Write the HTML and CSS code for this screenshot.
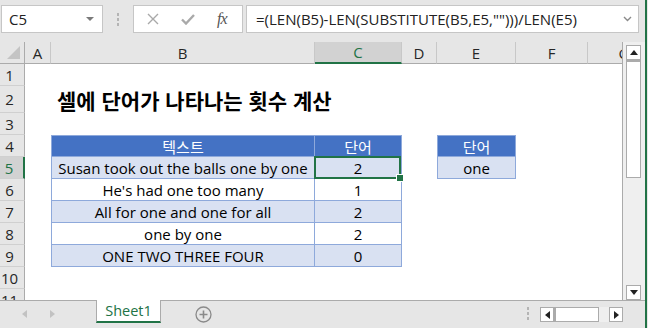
FILE: index.html
```html
<!DOCTYPE html>
<html lang="ko">
<head>
    <meta charset="UTF-8">
    <title>셀에 단어가 나타나는 횟수 계산</title>
    <link rel="stylesheet" href="styles.css">
</head>
<body>
    <div class="app">
        <div class="window">
            <!-- 수식 입력줄 -->
            <div class="formula-bar">
                <div class="name-box">
                    <span>C5</span>
                    <svg width="8" height="5" viewBox="0 0 8 5"><polygon points="0,0 8,0 4,4" fill="#7a7a7a"/></svg>
                </div>
                <div class="grip"><i></i><i></i><i></i></div>
                <div class="fx-buttons">
                    <svg width="12" height="12" viewBox="0 0 12 12"><path d="M1 1 L11 11 M11 1 L1 11" stroke="#a9a9a9" stroke-width="1.4" fill="none"/></svg>
                    <svg width="14" height="11" viewBox="0 0 14 11"><path d="M1 5.5 L5 9.5 L13 1" stroke="#a9a9a9" stroke-width="2.4" fill="none"/></svg>
                    <span class="fx">fx</span>
                </div>
                <div class="formula-input">
                    <span>=(LEN(B5)-LEN(SUBSTITUTE(B5,E5,"")))/LEN(E5)</span>
                    <svg width="9" height="6" viewBox="0 0 9 6"><path d="M1 1 L4.5 4.5 L8 1" stroke="#8a8a8a" stroke-width="1.4" fill="none"/></svg>
                </div>
            </div>

            <div class="main">
                <!-- 시트 영역 -->
                <div class="sheet">
                    <div class="corner"><svg width="25" height="22" viewBox="0 0 25 22"><polygon points="20,4 20,17 7,17" fill="#c4c4c4"/></svg></div>
                    <div class="ch">A</div>
                    <div class="ch">B</div>
                    <div class="ch active">C</div>
                    <div class="ch">D</div>
                    <div class="ch">E</div>
                    <div class="ch">F</div>
                    <div class="ch clip"><span>G</span></div>

                    <div class="rh">1</div><div class="rest"></div>

                    <div class="rh">2</div><div></div>
                    <div class="title">셀에 단어가 나타나는 횟수 계산</div>

                    <div class="rh">3</div><div class="rest"></div>

                    <div class="rh">4</div><div></div>
                    <div class="t hd first top">텍스트</div>
                    <div class="t hd top">단어</div>
                    <div></div>
                    <div class="t hd first top">단어</div>
                    <div class="tail"></div>

                    <div class="rh active">5</div><div></div>
                    <div class="t band first">Susan took out the balls one by one</div>
                    <div class="t band sel">2</div>
                    <div></div>
                    <div class="t band first">one</div>
                    <div class="tail"></div>

                    <div class="rh">6</div><div></div>
                    <div class="t first">He's had one too many</div>
                    <div class="t">1</div>
                    <div class="after"></div>

                    <div class="rh">7</div><div></div>
                    <div class="t band first">All for one and one for all</div>
                    <div class="t band">2</div>
                    <div class="after"></div>

                    <div class="rh">8</div><div></div>
                    <div class="t first">one by one</div>
                    <div class="t">2</div>
                    <div class="after"></div>

                    <div class="rh">9</div><div></div>
                    <div class="t band first">ONE TWO THREE FOUR</div>
                    <div class="t band">0</div>
                    <div class="after"></div>

                    <div class="rh">10</div><div class="rest"></div>
                    <div class="rh">11</div><div class="rest"></div>
                </div>

                <!-- 세로 스크롤바 -->
                <div class="vscroll">
                    <div class="vbar">
                        <div class="arrow-btn"><svg width="8" height="5" viewBox="0 0 8 5"><polygon points="0,5 8,5 4,0" fill="#222"/></svg></div>
                        <div class="vthumb"></div>
                        <div class="track"></div>
                        <div class="arrow-btn"><svg width="8" height="5" viewBox="0 0 8 5"><polygon points="0,0 8,0 4,5" fill="#222"/></svg></div>
                    </div>
                </div>
            </div>

            <!-- 시트 탭 -->
            <div class="tabs">
                <div class="tab-nav">
                    <svg width="5" height="8" viewBox="0 0 5 8"><polygon points="5,0 5,8 0,4" fill="#c2c2c2"/></svg>
                    <svg width="5" height="8" viewBox="0 0 5 8"><polygon points="0,0 0,8 5,4" fill="#c2c2c2"/></svg>
                </div>
                <div class="sheet-tab">Sheet1</div>
                <svg class="add-sheet" width="17" height="17" viewBox="0 0 17 17">
                    <circle cx="8.5" cy="8.5" r="7.5" stroke="#8a8a8a" stroke-width="1.3" fill="none"/>
                    <path d="M8.5 4.5 V12.5 M4.5 8.5 H12.5" stroke="#8a8a8a" stroke-width="1.6"/>
                </svg>
                <div class="spacer"></div>
                <div class="grip small"><i></i><i></i><i></i></div>
                <div class="hbar">
                    <div class="arrow-btn"><svg width="5" height="8" viewBox="0 0 5 8"><polygon points="5,0 5,8 0,4" fill="#222"/></svg></div>
                    <div class="hthumb"></div>
                    <div class="track"></div>
                    <div class="arrow-btn"><svg width="5" height="8" viewBox="0 0 5 8"><polygon points="0,0 0,8 5,4" fill="#222"/></svg></div>
                </div>
            </div>
        </div>
        <div class="edge"></div>
    </div>
</body>
</html>
```

FILE: styles.css
```css
:root {
    --green: #217346;
    --head: #4472C4;
    --band: #D9E1F2;
    --line: #8EA9DB;
    --chrome: #E6E6E6;
}

* {
    box-sizing: border-box;
    margin: 0;
    padding: 0;
}

body {
    width: 648px;
    height: 328px;
    overflow: hidden;
    background: var(--chrome);
    font-family: "Open Sans", "Noto Sans CJK KR", sans-serif;
    color: #000;
}

.app {
    display: flex;
    height: 328px;
}

.window {
    width: 645px;
    display: flex;
    flex-direction: column;
}

.edge {
    width: 2px;
    background: var(--green);
}

/* 수식 입력줄 */
.formula-bar {
    height: 42px;
    display: flex;
    align-items: flex-start;
    padding: 5px 6px 0 1px;
}

.name-box {
    width: 102px;
    height: 28px;
    background: #fff;
    border: 1px solid #c6c6c6;
    display: flex;
    align-items: center;
    justify-content: space-between;
    padding: 0 8px 0 7px;
    font-size: 15px;
    color: #222;
}

.grip {
    width: 30px;
    height: 28px;
    display: flex;
    flex-direction: column;
    align-items: center;
    justify-content: center;
    gap: 2px;
}

.grip i {
    width: 2px;
    height: 3px;
    background: #b4b4b4;
}

.fx-buttons {
    width: 110px;
    height: 28px;
    background: #fff;
    border: 1px solid #c6c6c6;
    display: flex;
    align-items: center;
    padding-left: 13px;
    gap: 22px;
}

.fx {
    font-family: "Liberation Serif", serif;
    font-style: italic;
    font-size: 16px;
    color: #555;
    letter-spacing: -1px;
}

.formula-input {
    flex: 1;
    height: 28px;
    margin-left: 3px;
    background: #fff;
    border: 1px solid #c6c6c6;
    display: flex;
    align-items: center;
    justify-content: space-between;
    padding: 0 6px 0 9px;
    font-size: 15px;
    color: #222;
}

/* 시트 */
.main {
    height: 258px;
    display: flex;
}

.sheet {
    width: 623px;
    height: 258px;
    overflow: hidden;
    background: #fff;
    border-right: 1px solid #ababab;
    display: grid;
    grid-template-columns: 25px 26px 264px 87px 35px 79px 72px 1fr;
    grid-template-rows: 22px 22px 27px repeat(9, 22px);
    font-size: 15px;
}

.corner,
.ch {
    background: var(--chrome);
    border-right: 1px solid #c8c8c8;
    border-bottom: 1px solid #ababab;
}

.corner {
    border-right-color: #ababab;
}

.ch {
    display: flex;
    align-items: center;
    justify-content: center;
    font-size: 15px;
    color: #262626;
}

.ch.active {
    background: #d2d2d2;
    color: var(--green);
    border-bottom: 2px solid var(--green);
}

.ch.clip {
    justify-content: flex-start;
    overflow: hidden;
    border-right: none;
}

.ch.clip span {
    flex: none;
    width: 72px;
    text-align: center;
}

.rh {
    background: var(--chrome);
    border-right: 1px solid #ababab;
    border-bottom: 1px solid #d0d0d0;
    display: flex;
    align-items: center;
    justify-content: center;
    padding-right: 5px;
    font-size: 15px;
    color: #262626;
}

.rh.active {
    background: #d2d2d2;
    color: var(--green);
    border-right: 2px solid var(--green);
}

.rest {
    grid-column: 2 / -1;
}

.tail {
    grid-column: 7 / -1;
}

.after {
    grid-column: 5 / -1;
}

.title {
    grid-column: 3 / -1;
    display: flex;
    align-items: center;
    padding-left: 6px;
    font-family: "Noto Sans CJK KR", sans-serif;
    font-weight: bold;
    font-size: 21px;
    white-space: nowrap;
}

/* 표 */
.t {
    display: flex;
    align-items: center;
    justify-content: center;
    white-space: nowrap;
    border-right: 1px solid var(--line);
    border-bottom: 1px solid var(--line);
}

.t.first {
    border-left: 1px solid var(--line);
}

.t.top {
    border-top: 1px solid var(--line);
}

.t.hd {
    background: var(--head);
    color: #fff;
}

.t.band {
    background: var(--band);
}

.sel {
    position: relative;
    z-index: 1;
}

.sel::after {
    content: "";
    position: absolute;
    top: -1px;
    left: -1px;
    right: 0;
    bottom: -1px;
    border: 2px solid var(--green);
}

.sel::before {
    content: "";
    position: absolute;
    right: -3px;
    bottom: -4px;
    width: 6px;
    height: 6px;
    background: var(--green);
    border: 1px solid #fff;
    z-index: 2;
}

/* 세로 스크롤바 */
.vscroll {
    width: 22px;
    background: #efefef;
    padding: 3px 0 0 3px;
}

.vbar {
    width: 15px;
    height: 255px;
    display: flex;
    flex-direction: column;
}

.arrow-btn {
    flex: none;
    width: 15px;
    height: 15px;
    background: #fff;
    border: 1px solid #ababab;
    display: flex;
    align-items: center;
    justify-content: center;
}

.vthumb {
    height: 118px;
    background: #fff;
    border: 1px solid #ababab;
    border-top-width: 2px;
}

.track {
    flex: 1;
    background: #efefef;
}

/* 시트 탭 */
.tabs {
    height: 28px;
    border-top: 1px solid #ababab;
    display: flex;
    align-items: flex-start;
}

.tab-nav {
    width: 96px;
    height: 26px;
    display: flex;
    align-items: center;
    padding-left: 22px;
    gap: 23px;
}

.sheet-tab {
    width: 65px;
    height: 23px;
    margin-top: -1px;
    background: #fff;
    border: 1px solid #ababab;
    border-top: none;
    border-bottom: 2px solid var(--green);
    display: flex;
    align-items: center;
    justify-content: center;
    font-size: 14.5px;
    color: var(--green);
}

.add-sheet {
    margin: 5px 0 0 34px;
}

.spacer {
    flex: 1;
}

.grip.small {
    width: 10px;
    height: 24px;
    margin-right: 7px;
}

.hbar {
    width: 83px;
    height: 15px;
    margin: 6px 22px 0 0;
    display: flex;
}

.hbar .arrow-btn {
    width: 14px;
}

.hthumb {
    width: 45px;
    background: #fff;
    border: 1px solid #ababab;
    border-left-width: 2px;
}
```
